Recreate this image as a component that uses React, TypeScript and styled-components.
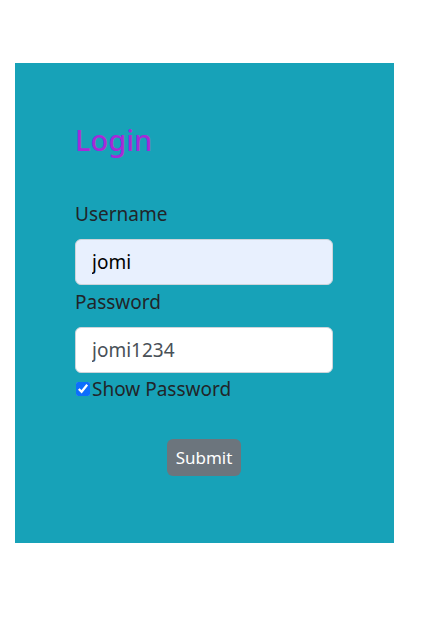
import React, { useState } from "react";
import styled, { createGlobalStyle } from "styled-components";

const Global = createGlobalStyle`
  html, body { margin: 0; padding: 0; background: #ffffff; }
  body { font-family: "Noto Sans", "Open Sans", sans-serif; color: #212529; }
  * { box-sizing: border-box; }
`;

const Card = styled.div`
  margin: 63px 0 0 15px;
  width: 379px;
  height: 480px;
  background: #17a2b8;
  padding: 58px 60px 0 60px;
`;

const Title = styled.h2`
  margin: 0 0 38px 0;
  font-size: 29px;
  font-weight: 500;
  line-height: 38px;
  color: #a52ad8;
`;

const Form = styled.form`
  display: flex;
  flex-direction: column;
  width: 258px;
`;

const Label = styled.label`
  font-size: 19px;
  line-height: 30px;
  padding-top: 2px;
  margin-bottom: 10px;
  color: #212529;
`;

const Input = styled.input<{ $autofill?: boolean }>`
  width: 258px;
  height: 46px;
  padding: 0 16px;
  font-family: inherit;
  font-size: 19px;
  color: ${(p) => (p.$autofill ? "#000000" : "#495057")};
  background: ${(p) => (p.$autofill ? "#e8f0fe" : "#ffffff")};
  border: 1px solid #ced4da;
  border-radius: 6px;
  outline: none;
`;

const CheckRow = styled.label`
  display: flex;
  align-items: center;
  gap: 2px;
  padding-top: 1px;
  font-size: 19px;
  line-height: 30px;
  color: #212529;
`;

const Check = styled.input`
  margin: 0 0 0 1px;
  width: 14px;
  height: 14px;
  accent-color: #0d6efd;
`;

const ButtonRow = styled.div`
  display: flex;
  justify-content: center;
  margin-top: 35px;
`;

const Submit = styled.button`
  width: 74px;
  height: 37px;
  border: none;
  border-radius: 6px;
  background: #6c757d;
  color: #ffffff;
  font-family: inherit;
  font-size: 17px;
  padding: 0;
`;

export default function App() {
  const [user, setUser] = useState("jomi");
  const [pass, setPass] = useState("jomi1234");
  const [show, setShow] = useState(true);
  return (
    <>
      <Global />
      <Card>
        <Title>Login</Title>
        <Form onSubmit={(e) => e.preventDefault()}>
          <Label htmlFor="u">Username</Label>
          <Input id="u" $autofill value={user} onChange={(e) => setUser(e.target.value)} />
          <Label htmlFor="p">Password</Label>
          <Input
            id="p"
            type={show ? "text" : "password"}
            value={pass}
            onChange={(e) => setPass(e.target.value)}
          />
          <CheckRow>
            <Check type="checkbox" checked={show} onChange={(e) => setShow(e.target.checked)} />
            Show Password
          </CheckRow>
          <ButtonRow>
            <Submit type="submit">Submit</Submit>
          </ButtonRow>
        </Form>
      </Card>
    </>
  );
}
